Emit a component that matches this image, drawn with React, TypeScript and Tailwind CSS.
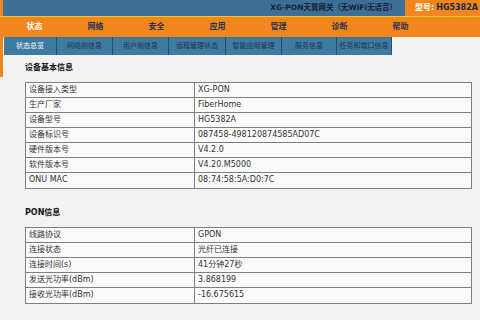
import React from 'react';

const FONT = { fontFamily: '"DejaVu Sans", "Noto Sans CJK SC", sans-serif' };

const navItems = ['状态', '网络', '安全', '应用', '管理', '诊断', '帮助'];

const tabs = [
  { label: '状态总览', w: 'w-[53px]' },
  { label: '网络侧信息', w: 'w-[56px]' },
  { label: '用户侧信息', w: 'w-[56px]' },
  { label: '远程管理状态', w: 'w-[57px]' },
  { label: '智能应用管理', w: 'w-[56px]' },
  { label: '服务信息', w: 'w-[55px]' },
  { label: '任务和端口信息', w: 'w-[55px]' },
];

const basicInfo: [string, string][] = [
  ['设备接入类型', 'XG-PON'],
  ['生产厂家', 'FiberHome'],
  ['设备型号', 'HG5382A'],
  ['设备标识号', '087458-498120874585AD07C'],
  ['硬件版本号', 'V4.2.0'],
  ['软件版本号', 'V4.20.M5000'],
  ['ONU MAC', '08:74:58:5A:D0:7C'],
];

const ponInfo: [string, string][] = [
  ['线路协议', 'GPON'],
  ['连接状态', '光纤已连接'],
  ['连接时间(s)', '41分钟27秒'],
  ['发送光功率(dBm)', '3.868199'],
  ['接收光功率(dBm)', '-16.675615'],
];

function InfoTable({ rows }: { rows: [string, string][] }) {
  return (
    <div className="w-[447px] border border-[#7f7f7f] bg-[#fafafa]">
      {rows.map(([k, v], i) => (
        <div
          key={k}
          className={`flex h-[15px] items-center text-[8px] leading-[14px] text-[#333] ${
            i < rows.length - 1 ? 'border-b border-[#7f7f7f]' : ''
          }`}
        >
          <div className="h-full w-[169px] border-r border-[#7f7f7f] px-[3px]">{k}</div>
          <div className="h-full flex-1 px-[3px]">{v}</div>
        </div>
      ))}
    </div>
  );
}

export default function App() {
  return (
    <div className="h-[320px] w-[480px] overflow-hidden bg-[#f2f2f2]" style={FONT}>
      {/* header */}
      <div className="flex h-[16px] border-l-[3px] border-[#f0861c] bg-[#3d6e93]">
        <div className="flex flex-1 items-center justify-end pr-[8px] text-[7.5px] font-bold text-[#15233d]">
          XG-PON天翼网关（无WiFi无语音）
        </div>
        <div className="flex w-[75px] items-center bg-[#f0861c] pl-[10px] text-[8px] font-bold">
          <span className="text-white">型号:</span>
          <span className="ml-[2px] text-[#1b2a4a]">HG5382A</span>
        </div>
      </div>
      <div className="h-[1px] bg-[#f7c81c]" />

      {/* main nav */}
      <div className="flex h-[20px] bg-[#f0861c] pl-[4px]">
        {navItems.map((n, i) => (
          <div
            key={n}
            className={`flex w-[61px] items-center justify-center text-[8px] font-bold ${
              i === 0 ? 'text-white' : 'text-[#2a3350]'
            }`}
          >
            {n}
          </div>
        ))}
      </div>

      {/* sub tabs */}
      <div className="flex h-[18px] border-l-[3px] border-[#f0861c] pl-[1px]">
        {tabs.map((t, i) => (
          <div
            key={t.label}
            className={`flex ${t.w} items-center justify-center border-r border-[#274f6d] bg-[#3f7aa0] text-[7px] ${
              i === 0 ? 'text-white' : 'text-[#1a3550]'
            }`}
          >
            {t.label}
          </div>
        ))}
      </div>

      {/* content */}
      <div className="flex">
        <div className="h-[22px] w-[3px] self-start bg-[#f0861c]" />
        <div className="flex flex-col pl-[22px]">
          <div className="mt-[7px] h-[12px] text-[8px] font-bold leading-[12px] text-[#111]">设备基本信息</div>
          <div className="mt-[8px]">
            <InfoTable rows={basicInfo} />
          </div>
          <div className="mt-[18px] h-[12px] text-[8px] font-bold leading-[12px] text-[#111]">PON信息</div>
          <div className="mt-[8px]">
            <InfoTable rows={ponInfo} />
          </div>
        </div>
      </div>
    </div>
  );
}
